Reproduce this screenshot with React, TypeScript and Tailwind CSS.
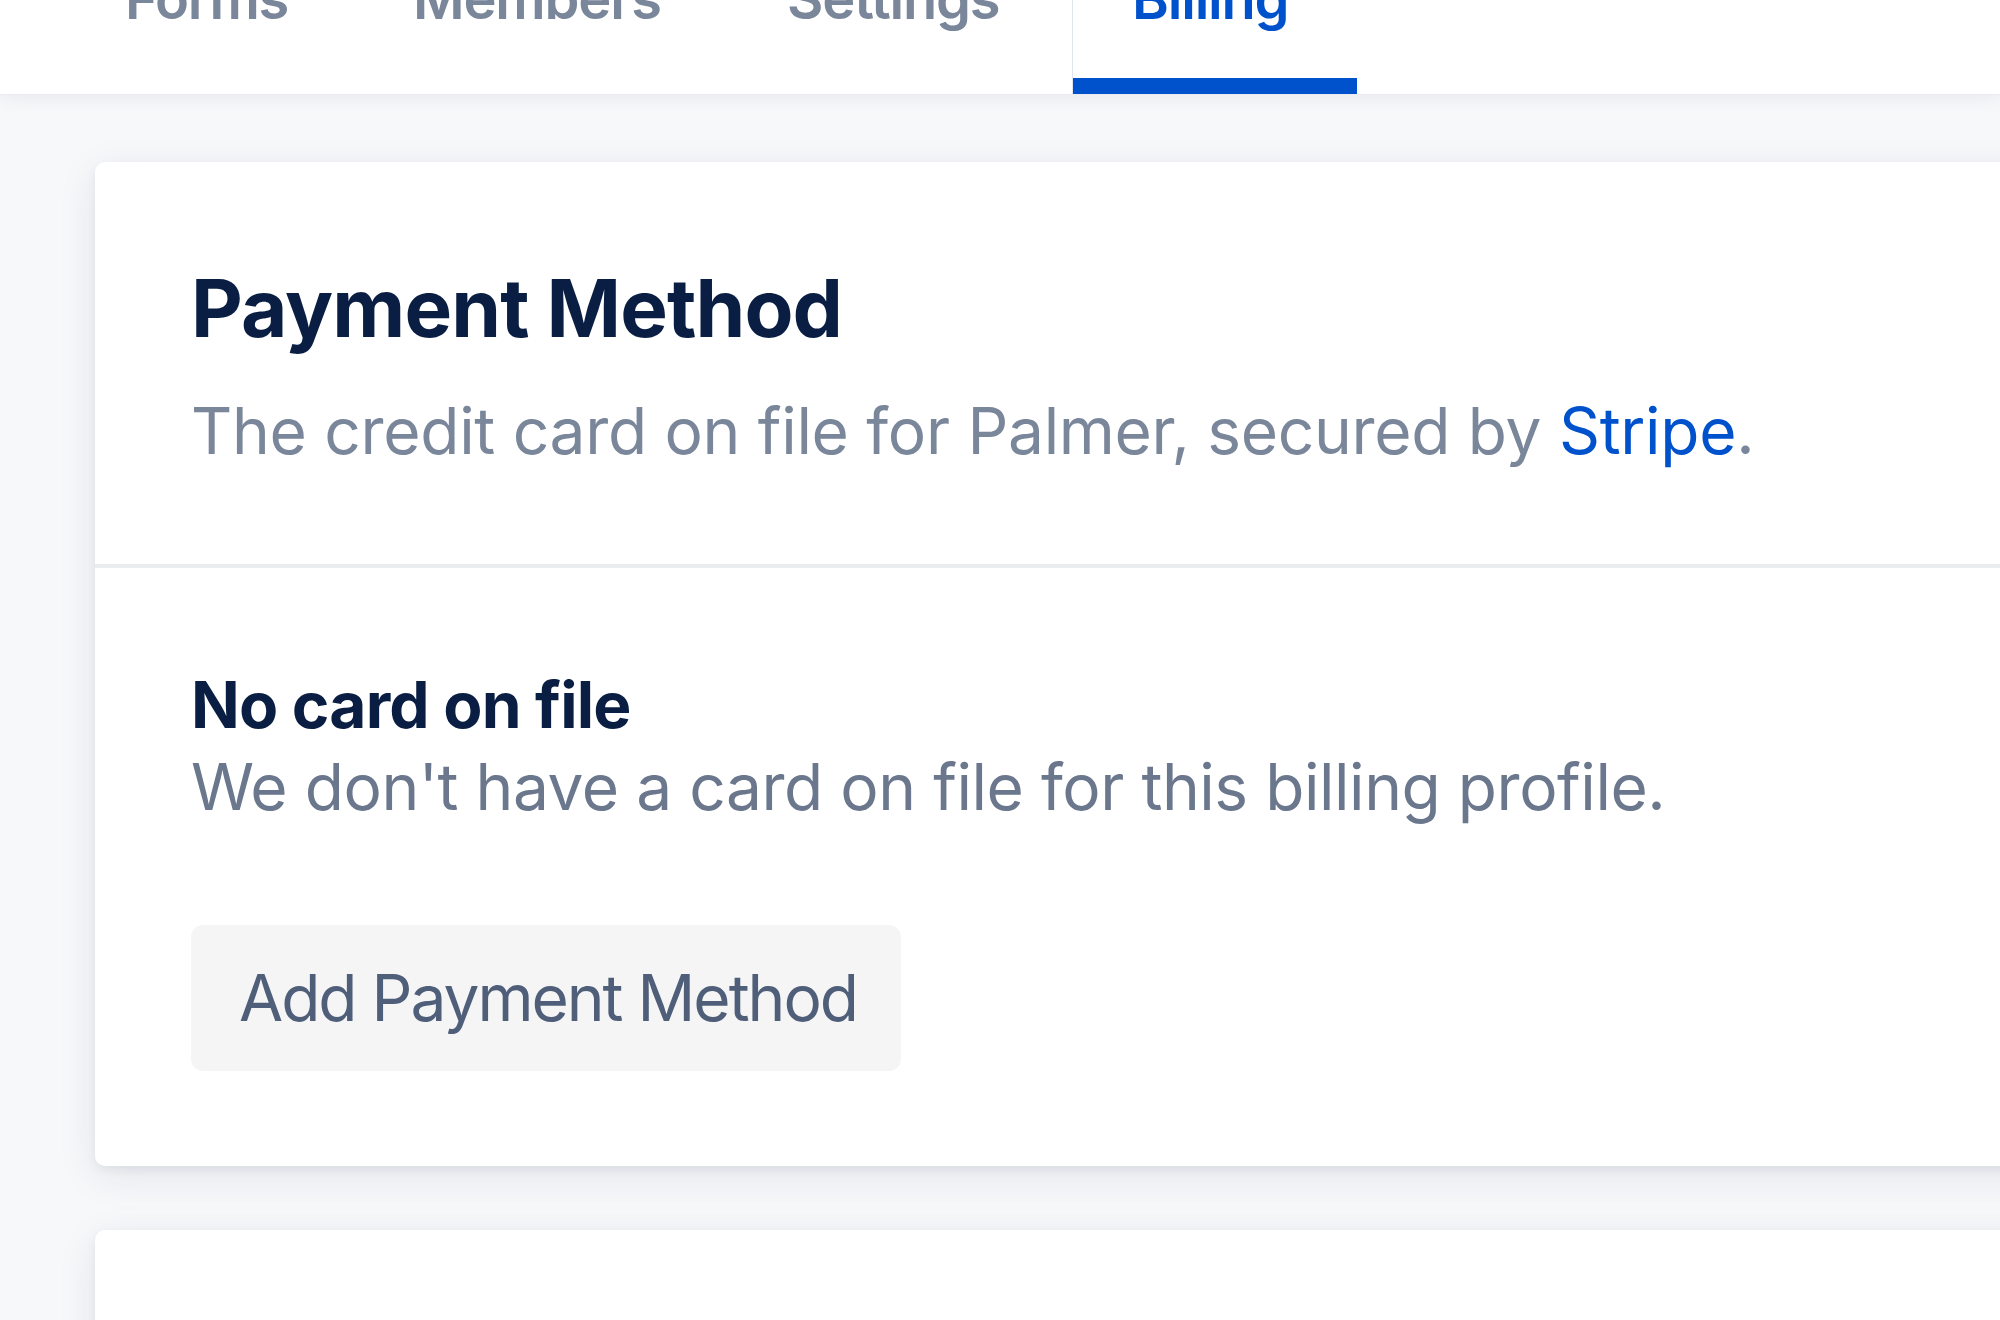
import React from 'react';

const tabs = [
  { label: 'Forms', width: 'w-[288px]' },
  { label: 'Members', width: 'w-[374px]' },
  { label: 'Settings', width: 'w-[345px]' },
  { label: 'Billing', width: 'w-[285px]' },
];

const TabNav = ({ active }: { active: string }) => (
  <nav className="relative z-10 flex h-[94px] items-end bg-white pl-[65px] shadow-[0_1px_0_#ebecf0,0_2px_20px_rgba(9,30,66,0.08)]">
    {tabs.map((tab) => {
      const isActive = tab.label === active;
      return (
        <div
          key={tab.label}
          className={`flex shrink-0 flex-col ${tab.width} ${isActive ? 'border-l border-[#dfe4ee] pl-[59px]' : 'pl-[60px]'}`}
        >
          <span
            className={`whitespace-nowrap text-[56px] font-semibold leading-none tracking-[-1.2px] ${isActive ? 'text-[#0052cc]' : 'text-[#7a869a]'}`}
          >
            {tab.label}
          </span>
          <div className={`mt-[51px] h-[16px] ${isActive ? '-ml-[59px] bg-[#0052cc]' : ''}`} />
        </div>
      );
    })}
  </nav>
);

const cardShadow = 'shadow-[0_4px_10px_rgba(9,30,66,0.06),0_10px_40px_rgba(9,30,66,0.09)]';

export default function App() {
  return (
    <div className="min-h-screen w-full overflow-hidden bg-[#f7f8fa] font-['Inter','Noto_Sans',sans-serif] antialiased">
      <TabNav active="Billing" />

      <main className="flex flex-col gap-16 pl-[95px] pt-[68px]">
        <section className={`w-[2400px] rounded-[10px] bg-white ${cardShadow}`}>
          <header className="px-24 pb-[85px] pt-[98px]">
            <h2 className="text-[80px] font-bold leading-[96px] tracking-[-0.9px] text-[#091e42]">Payment Method</h2>
            <p className="mt-[27px] text-[64px] leading-[96px] tracking-[-0.3px] text-[#7a869a]">
              The credit card on file for Palmer, secured by <a className="text-[#0052cc]">Stripe</a>.
            </p>
          </header>

          <div className="border-t-4 border-[#ebecf0] px-24 pb-[95px] pt-[97px]">
            <h3 className="text-[64px] font-bold leading-[80px] tracking-[-0.8px] text-[#091e42]">No card on file</h3>
            <p className="mt-[2px] text-[64px] leading-[80px] tracking-[-0.45px] text-[#6b778c]">
              We don't have a card on file for this billing profile.
            </p>
            <button className="mt-[98px] flex h-[146px] w-[710px] items-center rounded-[12px] bg-[#f5f5f5] pl-12 text-[64px] leading-none tracking-[-2px] whitespace-nowrap text-[#505f79]">
              Add Payment Method
            </button>
          </div>
        </section>

        <section className={`h-[400px] w-[2400px] rounded-[10px] bg-white ${cardShadow}`} />
      </main>
    </div>
  );
}
